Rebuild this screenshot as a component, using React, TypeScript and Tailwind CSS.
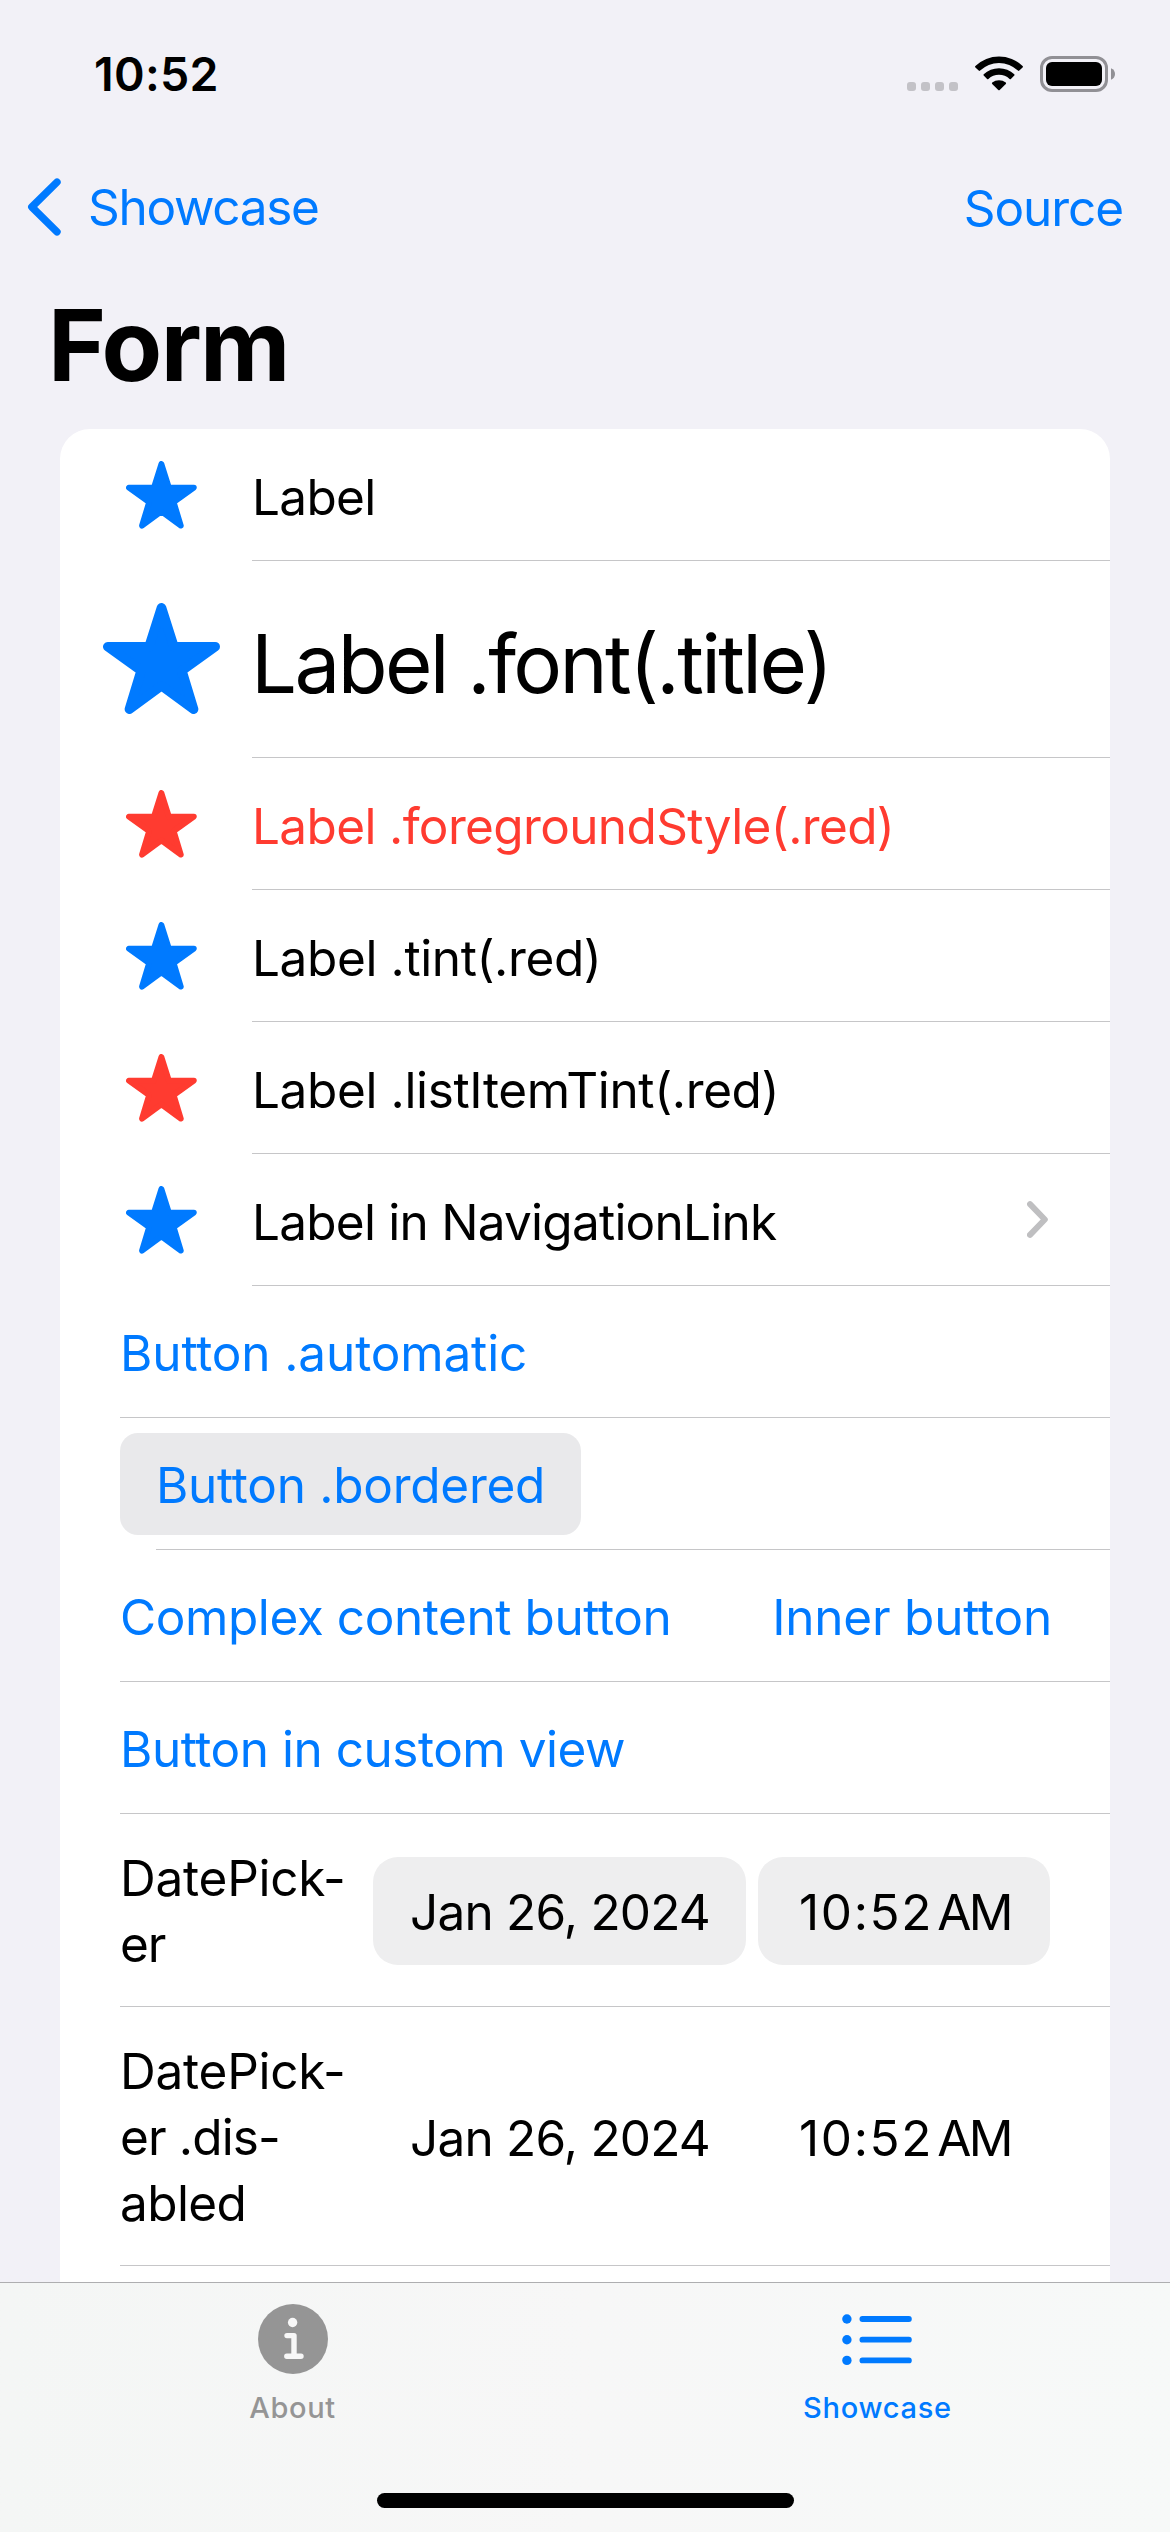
import type { ReactNode } from 'react';

function Star({ className }: { className: string }) {
  return (
    <svg viewBox="0 0 70.8 67.6" preserveAspectRatio="none" className={className}>
      <path
        d="M35.4 2.9 L42.9 26.6 L67.9 26.6 L47.7 41.15 L54.8 64.7 L35.4 50.4 L16 64.7 L23.1 41.15 L2.9 26.6 L27.9 26.6 Z"
        fill="currentColor"
        stroke="currentColor"
        strokeWidth="5.8"
        strokeLinejoin="round"
      />
    </svg>
  );
}

function LabelRow({
  text,
  star,
  tracking,
  color = 'text-black',
  chevron = false,
}: {
  text: string;
  star: string;
  tracking: string;
  color?: string;
  chevron?: boolean;
}) {
  return (
    <div className="flex h-[132px] shrink-0">
      <div className="flex w-[192px] shrink-0 items-start pt-[32px] pl-[66px]">
        <Star className={`h-[67.6px] w-[70.8px] ${star}`} />
      </div>
      <div className="flex grow items-center justify-between border-b border-[#c6c6c8] pr-[62px]">
        <span className={`pt-[5px] leading-[60px] whitespace-nowrap ${tracking} ${color}`}>{text}</span>
        {chevron && (
          <svg viewBox="0 0 21 37" className="-mt-px h-[37px] w-[21px]" fill="none">
            <path d="M3 3.2 L17.8 18.5 L3 33.8" stroke="#bfbfc1" strokeWidth="6" strokeLinecap="round" strokeLinejoin="round" />
          </svg>
        )}
      </div>
    </div>
  );
}

function ButtonRow({ children }: { children: ReactNode }) {
  return (
    <div className="flex h-[132px] shrink-0 pl-[60px] text-[#007aff]">
      <div className="flex grow items-center border-b border-[#c6c6c8]">{children}</div>
    </div>
  );
}

function DateRow({ lines, height, pill }: { lines: [string, string][]; height: string; pill: string }) {
  return (
    <div className={`flex shrink-0 pl-[60px] ${height}`}>
      <div className="flex grow items-center border-b border-[#c6c6c8] pt-[2px]">
        <div className="w-[253px] shrink-0">
          {lines.map(([line, tracking]) => (
            <div key={line} className={`leading-[66px] whitespace-nowrap ${tracking}`}>
              {line}
            </div>
          ))}
        </div>
        <div className={`flex h-[108px] w-[373px] items-center rounded-[25px] pl-[37px] ${pill}`}>
          <span className="pt-[2px] leading-[60px] tracking-[-0.78px] whitespace-nowrap">Jan 26, 2024</span>
        </div>
        <div className={`ml-[12px] flex h-[108px] w-[292px] items-center rounded-[25px] pl-[41px] ${pill}`}>
          <span className="pt-[2px] leading-[60px] tracking-[1.65px]">10:52</span>
          <span className="ml-[4px] pt-[2px] leading-[60px] tracking-[-2.65px]">AM</span>
        </div>
      </div>
    </div>
  );
}

function StatusBar() {
  return (
    <div className="flex h-[141px] items-start justify-between pl-[94px]">
      <span className="pt-[46px] text-[46.5px] leading-[56px] font-semibold tracking-[0.3px]">10:52</span>
      <div className="flex pt-[55px] pr-[55px]">
        <div className="flex gap-[5px] pt-[27px]">
          <div className="size-[9px] rounded-[3px] bg-[#c3c2c7]" />
          <div className="size-[9px] rounded-[3px] bg-[#c3c2c7]" />
          <div className="size-[9px] rounded-[3px] bg-[#c3c2c7]" />
          <div className="size-[9px] rounded-[3px] bg-[#c3c2c7]" />
        </div>
        <svg viewBox="0 0 48 36" className="ml-[17px] h-[36px] w-[48px]">
          <path d="M0.4 11 A34 34 0 0 1 47.6 11 Q48.3 11.7 47.6 12.4 L44.3 15.6 Q43.6 16.2 42.9 15.6 A27 27 0 0 0 5.1 15.6 Q4.4 16.2 3.7 15.6 L0.4 12.4 Q-0.3 11.7 0.4 11 Z" />
          <path d="M8.7 19.3 A22.3 22.3 0 0 1 39.3 19.3 Q39.9 20 39.3 20.6 L35.9 23.9 Q35.3 24.5 34.6 23.9 A15.6 15.6 0 0 0 13.4 23.9 Q12.7 24.5 12.1 23.9 L8.7 20.6 Q8.1 20 8.7 19.3 Z" />
          <path d="M17.2 27.6 A10.6 10.6 0 0 1 30.8 27.6 Q31.4 28.2 30.8 28.9 L24.7 35 Q24 35.6 23.3 35 L17.2 28.9 Q16.6 28.2 17.2 27.6 Z" />
        </svg>
        <svg viewBox="0 0 75 36" className="mt-[1px] ml-[17px] h-[36px] w-[75px]">
          <rect x="1.5" y="1.5" width="65" height="33" rx="10.5" fill="none" stroke="#919095" strokeWidth="3" />
          <rect x="6" y="6" width="56" height="24" rx="6" />
          <path d="M71 12.2 Q75 14 75 18 Q75 22 71 23.8 Z" fill="#919095" />
        </svg>
      </div>
    </div>
  );
}

function NavBar() {
  return (
    <div className="flex h-[144px] items-start pl-[27px] text-[#007aff]">
      <svg viewBox="0 0 34 58" className="mt-[37px] h-[58px] w-[34px]" fill="none">
        <path d="M30 4.2 L4.8 29 L30 53.8" stroke="currentColor" strokeWidth="7.4" strokeLinecap="round" strokeLinejoin="round" />
      </svg>
      <span className="ml-[27px] pt-[36px] leading-[60px] tracking-[-1.3px]">Showcase</span>
      <span className="mr-[47px] ml-auto pt-[37px] leading-[60px] tracking-[-1.08px]">Source</span>
    </div>
  );
}

function TabBar() {
  return (
    <div className="flex h-[250px] flex-col border-t border-[#aeaeb0] bg-linear-to-r from-[#f4f6f5] via-[#f7f7f7] to-[#f7f9f8]">
      <div className="grid h-[210px] grid-cols-2">
        <div className="flex flex-col items-center pt-[21px] text-[#959595]">
          <svg viewBox="0 0 70 70" className="size-[70px]">
            <circle cx="35" cy="35" r="35" fill="currentColor" />
            <circle cx="34.6" cy="18.5" r="4.7" fill="#f7f7f7" />
            <path d="M29 31.6 H36 V52.2 M28.8 52.2 H43" fill="none" stroke="#f7f7f7" strokeWidth="5.4" strokeLinecap="round" strokeLinejoin="round" />
          </svg>
          <span className="mt-[16px] text-[29px] leading-[35px] font-medium tracking-[0.64px]">About</span>
        </div>
        <div className="flex flex-col items-center pt-[21px] text-[#007aff]">
          <svg viewBox="0 0 70 70" className="-ml-[1px] size-[70px]">
            <circle cx="4.9" cy="15" r="4.7" fill="currentColor" />
            <circle cx="4.9" cy="35.7" r="4.7" fill="currentColor" />
            <circle cx="4.9" cy="56.4" r="4.7" fill="currentColor" />
            <path d="M20.4 15 H66.9 M20.4 35.7 H66.9 M20.4 56.4 H66.9" stroke="currentColor" strokeWidth="5.8" strokeLinecap="round" />
          </svg>
          <span className="mt-[16px] text-[29px] leading-[35px] font-medium tracking-[0.73px]">Showcase</span>
        </div>
      </div>
      <div className="mx-auto h-[15px] w-[417px] rounded-full bg-black" />
    </div>
  );
}

export default function App() {
  return (
    <div className="flex h-[2532px] w-[1170px] flex-col overflow-hidden bg-[#f2f1f7] font-['Inter',sans-serif] text-[49.5px] text-black">
      <StatusBar />
      <NavBar />
      <h1 className="h-[144px] pl-[48px] text-[99px] leading-[120px] font-bold tracking-[-1.67px]">Form</h1>
      <main className="mx-[60px] flex h-[1853px] shrink-0 flex-col overflow-hidden rounded-t-[30px] bg-white">
        <LabelRow text="Label" star="text-[#007aff]" tracking="tracking-[-0.69px]" />
        <div className="flex h-[197px] shrink-0">
          <div className="flex w-[192px] shrink-0 items-start pt-[42px] pl-[43px]">
            <Star className="h-[111px] w-[117px] text-[#007aff]" />
          </div>
          <div className="flex grow items-center border-b border-[#c6c6c8]">
            <span className="-ml-[1px] pt-[9px] text-[81.5px] leading-[99px] tracking-[-2.61px] whitespace-nowrap">
              Label .font(.title)
            </span>
          </div>
        </div>
        <LabelRow
          text="Label .foregroundStyle(.red)"
          star="text-[#ff3b30]"
          tracking="tracking-[-0.64px]"
          color="text-[#ff3b30]"
        />
        <LabelRow text="Label .tint(.red)" star="text-[#007aff]" tracking="tracking-[-0.39px]" />
        <LabelRow text="Label .listItemTint(.red)" star="text-[#ff3b30]" tracking="tracking-[-0.38px]" />
        <LabelRow text="Label in NavigationLink" star="text-[#007aff]" tracking="tracking-[-0.76px]" chevron />
        <ButtonRow>
          <span className="pt-[3px] leading-[60px] tracking-[-0.14px]">Button .automatic</span>
        </ButtonRow>
        <div className="h-[132px] shrink-0 pl-[60px]">
          <div className="flex h-[131px] items-center pt-px">
            <div className="flex h-[102px] w-[461px] items-center rounded-[18px] bg-[#e9e9eb] pl-[36px] text-[#007aff]">
              <span className="pt-[1px] leading-[60px] tracking-[-0.27px] whitespace-nowrap">Button .bordered</span>
            </div>
          </div>
          <div className="ml-[36px] h-px bg-[#c6c6c8]" />
        </div>
        <ButtonRow>
          <span className="pt-[3px] leading-[60px] tracking-[-0.42px]">Complex content button</span>
          <span className="mr-[58px] ml-auto pt-[3px] leading-[60px] tracking-[-0.22px]">Inner button</span>
        </ButtonRow>
        <ButtonRow>
          <span className="pt-[3px] leading-[60px] tracking-[-0.47px]">Button in custom view</span>
        </ButtonRow>
        <DateRow
          height="h-[193px]"
          pill="bg-[#eeeeef]"
          lines={[
            ['DatePick-', 'tracking-[-0.24px]'],
            ['er', 'tracking-[-1px]'],
          ]}
        />
        <DateRow
          height="h-[259px]"
          pill="bg-transparent"
          lines={[
            ['DatePick-', 'tracking-[-0.24px]'],
            ['er .dis-', 'tracking-[-0.87px]'],
            ['abled', 'tracking-[-0.61px]'],
          ]}
        />
      </main>
      <TabBar />
    </div>
  );
}
